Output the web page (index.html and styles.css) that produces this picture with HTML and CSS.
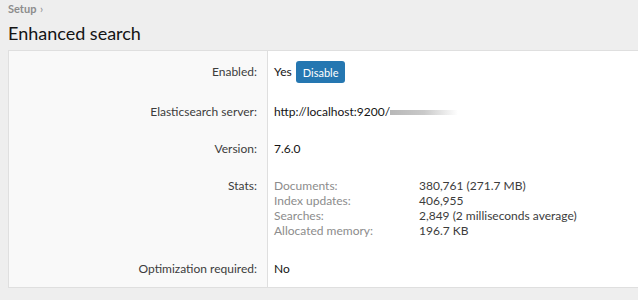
FILE: index.html
```html
<!DOCTYPE html>
<html lang="en">
<head>
    <meta charset="UTF-8">
    <meta name="viewport" content="width=device-width, initial-scale=1.0">
    <title>Enhanced search</title>
    <link rel="stylesheet" href="styles.css">
</head>
<body>
    <div class="breadcrumb">Setup <span class="sep">&rsaquo;</span></div>
    <h1>Enhanced search</h1>

    <div class="panel">
        <div class="form-row first">
            <div class="row-label">Enabled:</div>
            <div class="row-value">
                Yes <button type="button" class="btn">Disable</button>
            </div>
        </div>

        <div class="form-row">
            <div class="row-label">Elasticsearch server:</div>
            <div class="row-value">http://localhost:9200/<span class="blurred"></span></div>
        </div>

        <div class="form-row">
            <div class="row-label">Version:</div>
            <div class="row-value">7.6.0</div>
        </div>

        <div class="form-row">
            <div class="row-label">Stats:</div>
            <div class="row-value">
                <dl class="stats">
                    <dt>Documents:</dt>
                    <dd>380,761 (271.7 MB)</dd>
                    <dt>Index updates:</dt>
                    <dd>406,955</dd>
                    <dt>Searches:</dt>
                    <dd>2,849 (2 milliseconds average)</dd>
                    <dt>Allocated memory:</dt>
                    <dd>196.7 KB</dd>
                </dl>
            </div>
        </div>

        <div class="form-row">
            <div class="row-label">Optimization required:</div>
            <div class="row-value">No</div>
        </div>
    </div>
</body>
</html>
```

FILE: styles.css
```css
body {
    margin: 0;
    padding: 0 0 0 8px;
    background: #eeeeee;
    font-family: Lato, "Noto Sans", sans-serif;
    font-size: 12px;
    color: #141414;
    overflow: hidden;
}
.breadcrumb {
    padding-top: 2px;
    font-size: 11px;
    font-weight: bold;
    color: #8c8c8c;
    line-height: 13px;
}
.breadcrumb .sep {
    font-weight: normal;
    margin-left: 1px;
}
h1 {
    margin: 3px 0 0;
    font-size: 18px;
    font-weight: normal;
    line-height: 30px;
    color: #141414;
}
.panel {
    margin-top: 2px;
    width: 640px;
    border: 1px solid #dfdfdf;
    border-right: none;
    background: #fff;
}
.form-row {
    display: flex;
}
.row-label {
    width: 238px;
    flex: none;
    padding: 10px;
    text-align: right;
    background: #f9f9f9;
    border-right: 1px solid #dfdfdf;
    line-height: 17px;
    color: #3c3c3c;
}
.row-value {
    flex: 1;
    padding: 10px 6px;
    line-height: 17px;
    color: #141414;
}
.first .row-label,
.first .row-value {
    line-height: 22px;
}
.btn {
    margin-left: 1px;
    padding: 0 7px;
    height: 22px;
    border: none;
    border-radius: 3px;
    background: #2577b1;
    color: #fff;
    font-family: inherit;
    font-size: 11px;
    vertical-align: top;
}
.blurred {
    display: inline-block;
    width: 68px;
    height: 5px;
    vertical-align: 1px;
    background: linear-gradient(to right, #b8b8b8 0%, #c9c9c9 50%, #ffffff 100%);
}
.stats {
    margin: 1px 0 2px;
    display: grid;
    grid-template-columns: 145px auto;
    line-height: 15px;
}
.stats dt {
    color: #8c8c8c;
}
.stats dd {
    margin: 0;
    color: #3c3c3c;
}
```
